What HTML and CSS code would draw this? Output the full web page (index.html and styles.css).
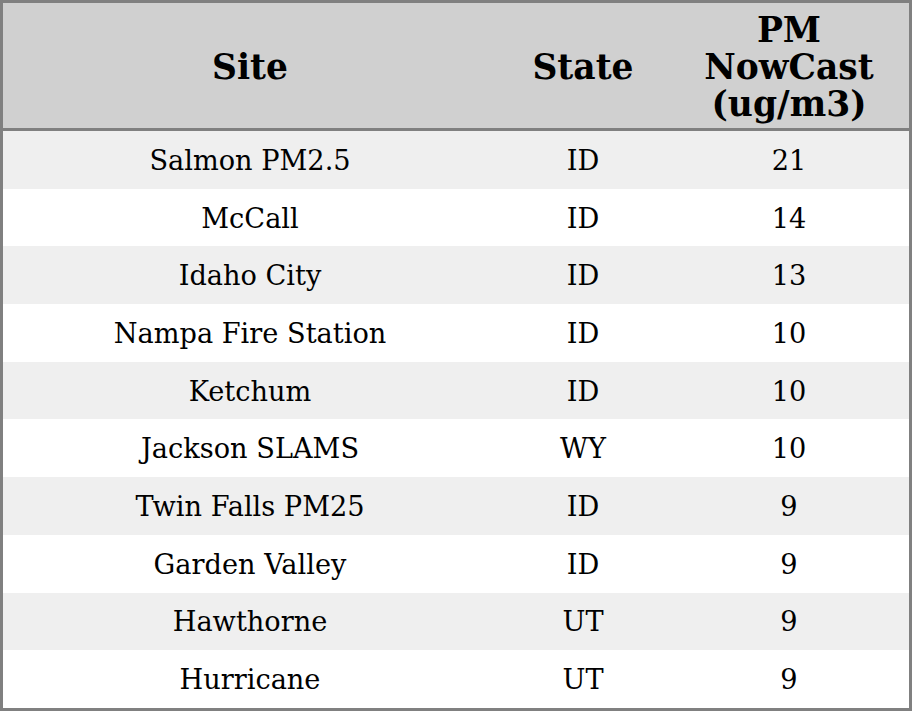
FILE: index.html
```html
<!DOCTYPE html>
<html>
<head>
<meta charset="utf-8">
<link rel="stylesheet" href="styles.css">
</head>
<body>
<div class="frame">
<table class="data">
  <colgroup>
    <col class="c-site">
    <col class="c-state">
    <col class="c-pm">
  </colgroup>
  <thead>
    <tr><th>Site</th><th>State</th><th>PM<br>NowCast<br>(ug/m3)</th></tr>
  </thead>
  <tbody>
    <tr><td>Salmon PM2.5</td><td>ID</td><td>21</td></tr>
    <tr><td>McCall</td><td>ID</td><td>14</td></tr>
    <tr><td>Idaho City</td><td>ID</td><td>13</td></tr>
    <tr><td>Nampa Fire Station</td><td>ID</td><td>10</td></tr>
    <tr><td>Ketchum</td><td>ID</td><td>10</td></tr>
    <tr><td>Jackson SLAMS</td><td>WY</td><td>10</td></tr>
    <tr><td>Twin Falls PM25</td><td>ID</td><td>9</td></tr>
    <tr><td>Garden Valley</td><td>ID</td><td>9</td></tr>
    <tr><td>Hawthorne</td><td>UT</td><td>9</td></tr>
    <tr><td>Hurricane</td><td>UT</td><td>9</td></tr>
  </tbody>
</table>
</div>
</body>
</html>
```
FILE: styles.css
```css
html, body {
  margin: 0;
  padding: 0;
  background: #ffffff;
}
.frame {
  width: 912px;
  height: 711px;
  box-sizing: border-box;
  border: 3px solid #808080;
  overflow: hidden;
}
.data {
  width: 906px;
  border-collapse: collapse;
  table-layout: fixed;
  font-family: "DejaVu Serif", serif;
  color: #000;
}
.c-site { width: 494px; }
.c-state { width: 172px; }
.c-pm { width: 240px; }
.data th {
  background: #d0d0d0;
  font-weight: bold;
  font-size: 34.5px;
  line-height: 37px;
  height: 121px;
  padding: 4px 0 0;
  text-align: center;
  vertical-align: middle;
  border-bottom: 3px solid #808080;
}
.data td {
  font-size: 27.2px;
  line-height: 32px;
  height: 55.7px;
  padding: 2px 0 0;
  text-align: center;
  vertical-align: middle;
}
.data tbody tr:nth-child(odd) td {
  background: #efefef;
}
.data tbody tr:nth-child(even) td {
  background: #ffffff;
}
```
